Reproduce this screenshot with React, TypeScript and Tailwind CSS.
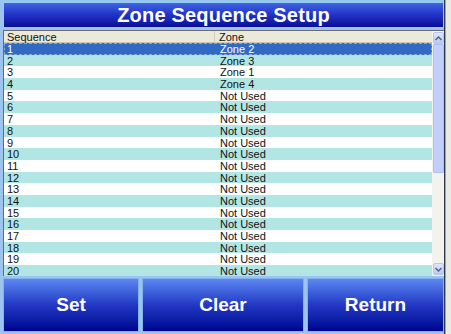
import React from "react";

const ROWS = [
  "Zone 2",
  "Zone 3",
  "Zone 1",
  "Zone 4",
  ...Array.from({ length: 16 }, () => "Not Used"),
];

const ScrollArrow: React.FC<{ up?: boolean }> = ({ up }) => (
  <div className="h-[12px] w-[11px] shrink-0 rounded-[2px] border border-[#b7c6f2] bg-gradient-to-b from-[#dfe6fd] to-[#b9c8f5] flex items-center justify-center">
    <svg width="7" height="5" viewBox="0 0 7 5">
      <path
        d={up ? "M0.5 4 L3.5 1 L6.5 4" : "M0.5 1 L3.5 4 L6.5 1"}
        fill="none"
        stroke="#4d6185"
        strokeWidth="1.4"
      />
    </svg>
  </div>
);

const BigButton: React.FC<{ label: string; width: string }> = ({ label, width }) => (
  <button
    className={`${width} h-full bg-gradient-to-b from-[#5f86f2] via-[#2437c4] to-[#000090] border border-[#7fb4f0] text-white font-bold text-[19px] flex items-center justify-center`}
  >
    {label}
  </button>
);

export default function App() {
  return (
    <div className="w-[451px] h-[334px] overflow-hidden bg-[#9dc3ef] flex font-['Liberation_Sans',Arial,sans-serif]">
      <div className="w-[444px] h-full flex flex-col pl-[3px] pt-[2px] pb-[3px]">
        {/* title bar */}
        <div className="h-[26px] w-[441px] shrink-0 border border-[#8fd0f5] bg-gradient-to-b from-[#4262e4] via-[#2231c6] to-[#0a0c98] flex items-center justify-center">
          <span className="text-white font-bold text-[20px] leading-none tracking-[0.2px]">
            Zone Sequence Setup
          </span>
        </div>

        {/* list */}
        <div className="mt-[2px] h-[246px] w-[441px] shrink-0 flex border-l border-t border-[#6b6b6b] bg-white overflow-hidden">
          <div className="flex-1 flex flex-col overflow-hidden text-[11px] text-[#111]">
            <div className="h-[12px] shrink-0 flex bg-[#ebe9d9] border-b border-[#c9c6b4] leading-[12px]">
              <div className="w-[211px] pl-[3px] border-r border-[#d3d0bf]">Sequence</div>
              <div className="flex-1 pl-[4px]">Zone</div>
            </div>
            {ROWS.map((zone, i) => {
              const selected = i === 0;
              const bg = selected ? "bg-[#316ac5] text-white" : i % 2 === 1 ? "bg-[#b2e6e4]" : "bg-white";
              return (
                <div
                  key={i}
                  className={`h-[11.7px] shrink-0 flex leading-[12px] ${bg} ${selected ? "outline outline-1 outline-dashed outline-[#8aa6d8] -outline-offset-1" : ""}`}
                >
                  <div className="w-[211px] pl-[3px]">{i + 1}</div>
                  <div className="flex-1 pl-[5px]">{zone}</div>
                </div>
              );
            })}
          </div>

          {/* scrollbar */}
          <div className="w-[12px] shrink-0 flex flex-col items-center bg-[#f3f2ec] pt-[1px] pb-[1px]">
            <ScrollArrow up />
            <div className="w-[11px] h-[129px] shrink-0 bg-[#c3cffb] border border-[#aebff5] rounded-[1px]" />
            <div className="flex-1" />
            <ScrollArrow />
          </div>
        </div>

        {/* buttons */}
        <div className="mt-[2px] h-[54px] shrink-0 flex gap-[3px]">
          <BigButton label="Set" width="w-[137px]" />
          <BigButton label="Clear" width="w-[163px]" />
          <BigButton label="Return" width="w-[138px]" />
        </div>
      </div>

      {/* neighbouring window edge */}
      <div className="w-[1px] h-full bg-[#2e3a4a]" />
      <div className="flex-1 h-full bg-[#e9e9e6] border-l border-[#9aa3b0]" />
    </div>
  );
}
